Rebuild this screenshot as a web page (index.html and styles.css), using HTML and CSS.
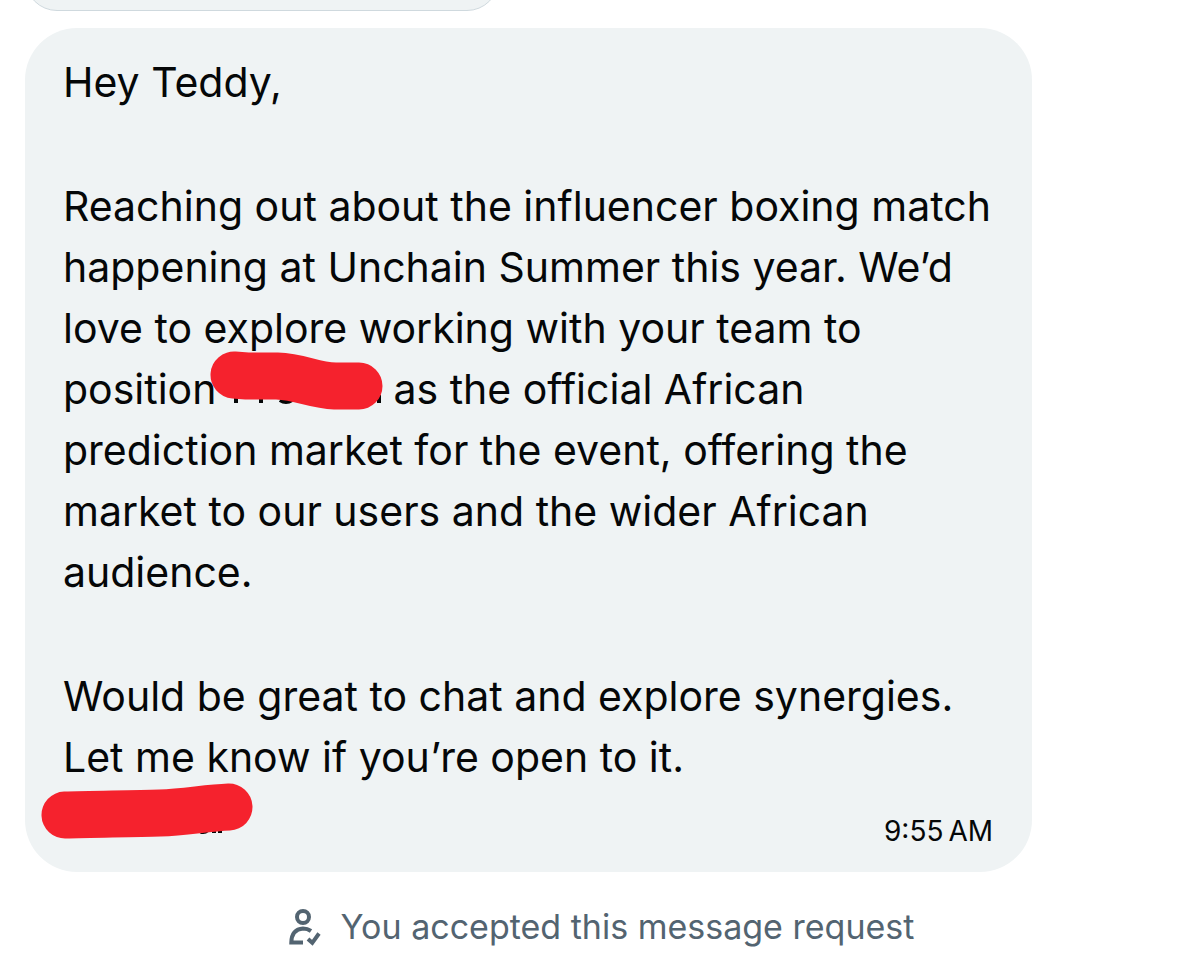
FILE: index.html
```html
<!DOCTYPE html>
<html lang="en">

<head>
	<meta charset="utf-8">
	<title>Messages</title>
	<link rel="stylesheet" href="styles.css">
</head>

<body>
	<main class="chat">
		<div class="previous"></div>
		<article class="bubble">
			<p>Hey Teddy,</p>
			<p>Reaching out about the influencer boxing match<br>
				happening at Unchain Summer this year. We’d<br>
				love to explore working with your team to<br>
				position <span class="redacted"><svg class="scribble" width="174" height="60" viewBox="0 0 174 60" aria-hidden="true">
					<path class="trace" d="M26 44V52M51 44V52M70 49Q76 53 82 49M169 44V52" />
					<path class="marker" d="M24 24L37 25H67C91 26 103 34 125 35H149" />
				</svg></span> as the official African<br>
				prediction market for the event, offering the<br>
				market to our users and the wider African<br>
				audience.</p>
			<p>Would be great to chat and explore synergies.<br>
				Let me know if you’re open to it.</p>
			<footer class="meta">
				<svg class="signature" width="214" height="58" viewBox="0 0 214 58" aria-hidden="true">
					<path class="trace" d="M158 47Q162 51 167 47M173 44V50M179 44V50" />
					<path class="marker" d="M24 32C50 31 90 31 119 30C145 29 165 25 188 24" />
				</svg>
				<time>9:55&#8239;AM</time>
			</footer>
		</article>
		<div class="notice">
			<svg class="person" width="34" height="40" viewBox="0 0 34 40" aria-hidden="true">
				<circle cx="16" cy="10" r="6" />
				<path d="M24 24Q20.5 21.5 16 21.5C8.5 22 4.5 27 4.3 35.5H16" />
				<path d="M21 32L25.3 35.8L32 26.5" />
			</svg>
			<span>You accepted this message request</span>
		</div>
	</main>
</body>

</html>
```
FILE: styles.css
```css
body {
	margin: 0;
	background: #fff;
	color: #050708;
	font-family: Inter, "Liberation Sans", sans-serif;
}

.chat {
	padding: 0 24px 0 25px;
	overflow: hidden;
}

/* only the bottom edge of the earlier message is in view */
.previous {
	width: 41%;
	height: 80px;
	margin-top: -71px;
	border: 1px solid #cfd9de;
	border-radius: 32px;
	background: #eff3f4;
}

.bubble {
	width: 87.5%;
	box-sizing: border-box;
	margin-top: 17px;
	padding: 24px 39px 22px 38px;
	border-radius: 52px;
	background: #eff3f4;
	font-size: 41px;
	line-height: 61px;
}

p {
	margin: 0 0 63px;
}

p:last-of-type {
	margin-bottom: 0;
}

.redacted {
	display: inline-block;
	position: relative;
	width: 154px;
	height: 61px;
	vertical-align: top;
}

.scribble {
	position: absolute;
	left: -18px;
	top: -8px;
}

.marker {
	fill: none;
	stroke: #f5222d;
	stroke-width: 47px;
	stroke-linecap: round;
	stroke-linejoin: round;
}

.trace {
	fill: none;
	stroke: #050708;
	stroke-width: 4px;
}

.meta {
	position: relative;
	display: flex;
	justify-content: flex-end;
	padding-top: 24px;
	font-size: 28px;
	line-height: 38px;
}

.signature {
	position: absolute;
	left: -22px;
	top: -5px;
}

.notice {
	display: flex;
	align-items: center;
	justify-content: center;
	gap: 20px;
	margin: 34px 0 20px;
	color: #536471;
	font-size: 34px;
	line-height: 41px;
}

.person {
	fill: none;
	stroke: currentColor;
	stroke-width: 4px;
}
```
